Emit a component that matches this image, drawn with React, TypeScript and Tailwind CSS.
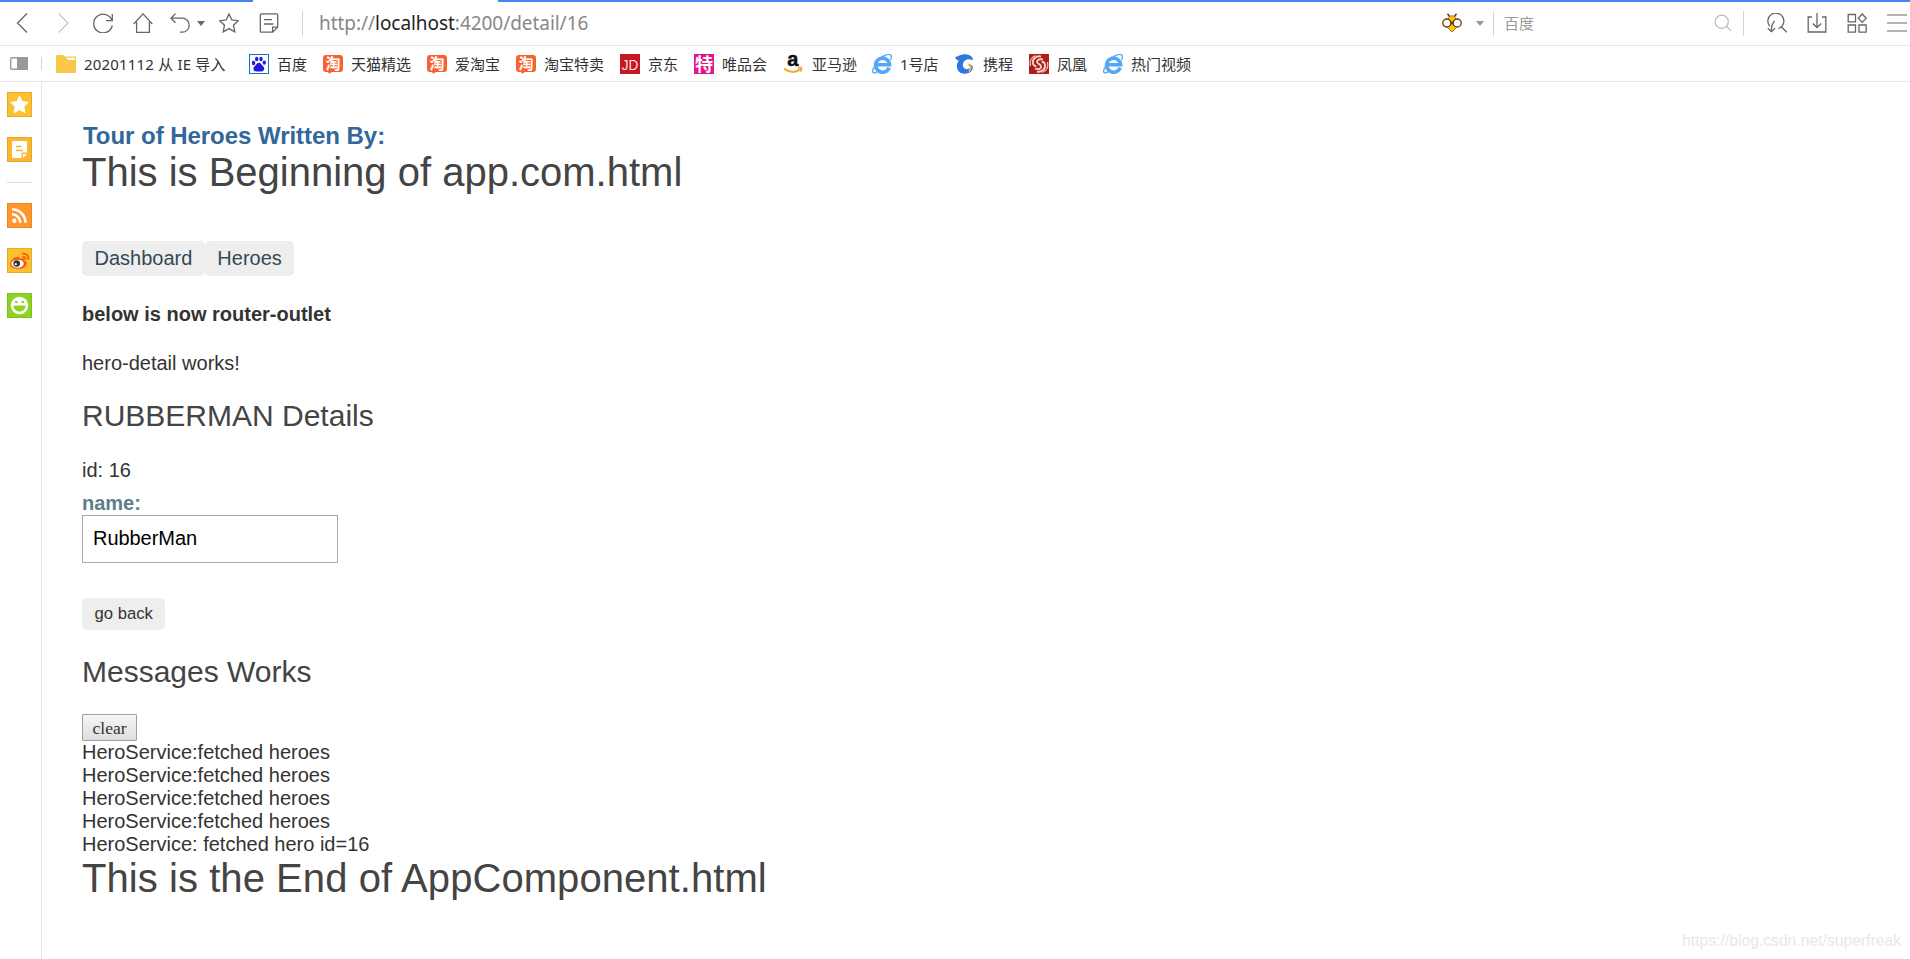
import type { ReactNode } from "react";

const ui = "font-['Noto_Sans','Noto_Sans_CJK_SC',sans-serif]";

function Glyph({ children, className = "" }: { children: ReactNode; className?: string }) {
  return (
    <svg viewBox="0 0 20 20" width="20" height="20" fill="none" stroke="#666" strokeWidth="1.3" className={`shrink-0 ${className}`}>
      {children}
    </svg>
  );
}

function Tile({ children }: { children: ReactNode }) {
  return (
    <svg viewBox="0 0 25 25" width="25" height="25" className="block shrink-0">
      {children}
    </svg>
  );
}

function TaoIcon() {
  return (
    <svg viewBox="0 0 20 20" width="20" height="20" className="shrink-0 overflow-visible">
      <path d="M3 1h14q3 0 3 3v11q0 3-3 3H9l-3 1.800L5 18H3q-3 0-3-3V4q0-3 3-3z" fill="#f8622e" />
      <text x="10" y="14.800" fontSize="15" fontWeight="700" textAnchor="middle" fill="#fff" fontFamily="Noto Sans CJK SC">淘</text>
    </svg>
  );
}

function IeIcon() {
  return (
    <svg viewBox="0 0 20 20" width="20" height="20" fill="none" className="shrink-0">
      <path d="M17.200 13.600A7 7 0 1 1 17.600 10.800H5.400" stroke="#52a8f7" strokeWidth="3.600" />
      <path d="M2.600 12C-.6 17.500.3 20 3.600 18.600c1-.4 2-1 2.700-1.600M10 2.900C15.500-.3 20-.6 19.300 3.500c-.1 1-.5 1.900-.9 2.600" stroke="#52a8f7" strokeWidth="1.300" />
    </svg>
  );
}

function BaiduIcon() {
  return (
    <svg viewBox="0 0 20 20" width="20" height="20" className="shrink-0">
      <rect x=".5" y=".5" width="19" height="19" fill="#fff" stroke="#1073c4" />
      <g fill="#2319dc">
        <ellipse cx="4.600" cy="9" rx="1.700" ry="2.200" />
        <ellipse cx="7.700" cy="5" rx="1.700" ry="2.300" />
        <ellipse cx="12" cy="5" rx="1.700" ry="2.300" />
        <ellipse cx="15.300" cy="8.600" rx="1.700" ry="2.200" />
        <path d="M9.900 8.800c1.800 0 2.500 1.600 3.800 2.900 2.600 2.400 1.600 5.700-1 5.700H7c-2.800 0-3.500-3.200-.9-5.600 1.300-1.300 2-3 3.800-3z" />
      </g>
    </svg>
  );
}

const bookmarks: { label: string; width: string; icon: ReactNode }[] = [
  {
    label: "20201112 从 IE 导入",
    width: "w-[193px] tracking-[0.18px]",
    icon: (
      <svg viewBox="0 0 20 20" width="20" height="20" className="shrink-0">
        <path d="M0 2q0-1 1-1h6l2 1.500h10q1 0 1 1V18q0 1-1 1H1q-1 0-1-1z" fill="#f9c84b" />
        <path d="M10 3.800h8.800V6H12z" fill="#fff" />
      </svg>
    ),
  },
  { label: "百度", width: "w-[74px]", icon: <BaiduIcon /> },
  { label: "天猫精选", width: "w-[104px]", icon: <TaoIcon /> },
  { label: "爱淘宝", width: "w-[89px]", icon: <TaoIcon /> },
  { label: "淘宝特卖", width: "w-[104px]", icon: <TaoIcon /> },
  {
    label: "京东",
    width: "w-[74px]",
    icon: (
      <svg viewBox="0 0 20 20" width="20" height="20" className="shrink-0">
        <rect width="20" height="20" fill="#c91623" />
        <text x="10" y="15.500" fontSize="15.500" textAnchor="middle" textLength="16.500" lengthAdjust="spacingAndGlyphs" fill="#fbe0e2" fontFamily="Liberation Sans">JD</text>
      </svg>
    ),
  },
  {
    label: "唯品会",
    width: "w-[90px]",
    icon: (
      <svg viewBox="0 0 20 20" width="20" height="20" className="shrink-0 overflow-visible">
        <rect width="20" height="20" fill="#e4148c" />
        <text x="10" y="16.500" fontSize="18" fontWeight="700" textAnchor="middle" fill="#fff" fontFamily="Noto Sans CJK SC">特</text>
      </svg>
    ),
  },
  {
    label: "亚马逊",
    width: "w-[88px]",
    icon: (
      <svg viewBox="0 0 20 20" width="20" height="20" className="shrink-0 overflow-visible">
        <text x="8.800" y="12.300" fontSize="20" fontWeight="700" textAnchor="middle" fill="#111" stroke="#111" strokeWidth=".5" fontFamily="Liberation Sans">a</text>
        <path d="M0 14.500c5 4.400 11.500 4.200 16 1.200M13.800 13.800c3.500-.7 4.600.2 2.700 3.700" fill="none" stroke="#f9a52b" strokeWidth="2" />
      </svg>
    ),
  },
  { label: "1号店", width: "w-[83px]", icon: <IeIcon /> },
  {
    label: "携程",
    width: "w-[74px]",
    icon: (
      <svg viewBox="0 0 20 20" width="20" height="20" className="shrink-0">
        <path d="M0 3C3.500 2.500 5 .5 9 .2c3.500-.3 6 .8 7.500 2.300.8.900 1 2 1.800 3-2 .8-4.300-.6-6.300 0C8.800 6.500 7 9.500 8.300 13c1.200 2.800 5 2.700 7 .6l1.600 3C13 21 5.500 21 2.800 16 1.200 13 1.600 9.500 3.800 6.500 2.200 6.300.6 5 0 3z" fill="#2a78e0" />
        <path d="M13 10.500c4-.6 6.200 2 4 5.500-1 1.700-3 2.500-4.500 2.300 3-1.700 4-5 .5-7.800z" fill="#2a78e0" />
        <path d="M13.500 10c3 2 3 5 .3 7.500" fill="none" stroke="#f7b43c" strokeWidth="1.800" />
      </svg>
    ),
  },
  {
    label: "凤凰",
    width: "w-[74px]",
    icon: (
      <svg viewBox="0 0 20 20" width="20" height="20" className="shrink-0">
        <rect width="20" height="20" fill="#b01c16" />
        <g fill="none" stroke="#f2d3cf" strokeWidth="1.900">
          <path d="M14 5.500C11 4.500 7.500 6 8.200 8.500c.6 1.700 4.200 1.800 4 4.300-.3 2.200-3.700 3-6.200 1.700" />
          <path d="M12 2.500C7 1.500 3 5 4 9.500c.5 1.800 1.800 2.800 3.500 3M8 17.500c5 1 9-2.500 8-7-.5-1.800-1.800-2.800-3.500-3" />
          <path d="M1.500 12C.3 7 2.500 3 6.500 1.500M18.500 8c1.200 5-1 9-5 10.500" strokeWidth="1.200" />
        </g>
      </svg>
    ),
  },
  { label: "热门视频", width: "w-[104px]", icon: <IeIcon /> },
];

function Toolbar() {
  return (
    <div className="flex h-[46px] flex-col border-b border-[#e6e6e6]">
      <div className="flex h-[2px] shrink-0 justify-between">
        <div className="w-[253px] bg-[#4486f0]" />
        <div className="w-[1412px] bg-[#4486f0]" />
      </div>
      <div className="flex h-[42px] items-center">
        <Glyph className="ml-3"><path d="M15 0.500 5.500 10l9.500 9.500" /></Glyph>
        <Glyph className="ml-[21px]"><path d="M5.500.5 15 10l-9.500 9.500" stroke="#c4c4c4" /></Glyph>
        <Glyph className="ml-5"><path d="M19 7.500A9.400 9.400 0 1 0 19.300 12.500M19.300 1v6.700H13" /></Glyph>
        <Glyph className="ml-5"><path d="M.7 11 10 .9 19.300 11M3.600 9v10.300h12.800V9" /></Glyph>
        <Glyph className="ml-[17px]"><path d="M5.500.6.900 5.200l4.600 4.600M1.200 5.200h11a7 7 0 0 1 0 14H10" /></Glyph>
        <svg viewBox="0 0 8 5" width="8" height="5" className="ml-[7px]"><path d="M0 0h8L4 5z" fill="#666" /></svg>
        <Glyph className="ml-[14px]"><path d="m10 .9 2.800 6 6.500.8-4.800 4.500 1.300 6.700-5.800-3.300-5.800 3.300 1.300-6.700L.7 7.700l6.500-.8z" /></Glyph>
        <Glyph className="ml-5"><path d="M2.200.9h15.600q.9 0 .9.900v12.400l-5 5H2.200q-.9 0-.9-.9V1.800q0-.9.900-.9zM18.500 14.200h-4.900V19M5 6.700h8M5 11h9.500" /></Glyph>
        <div className="ml-[23px] h-[25px] w-px bg-[#d4d4d4]" />
        <div className={`ml-4 flex-1 whitespace-nowrap text-[19px] leading-[26px] tracking-[-0.05px] text-[#888] ${ui}`}>
          http://<span className="text-[#222]">localhost</span>:4200/detail/16
        </div>
        <svg viewBox="0 0 20 20" width="20" height="20" className="shrink-0">
          <path d="M5.500.8 8 4M14.500.8 12 4" stroke="#6f3713" strokeWidth="1.500" />
          <path d="M10 2.800c2.600 0 4 2 4.500 4.200L15 14l-5 5-5-5 .5-7C6 4.800 7.400 2.800 10 2.800z" fill="#fbc70c" stroke="#8a5a10" strokeWidth=".7" />
          <circle cx="4.800" cy="10" r="4" fill="#fff" stroke="#6f3713" strokeWidth="1.300" />
          <circle cx="15.200" cy="10" r="4" fill="#fff" stroke="#6f3713" strokeWidth="1.300" />
          <path d="m8 7.500 4 5M12 7.500l-4 5" stroke="#6f3713" strokeWidth="1.200" />
        </svg>
        <svg viewBox="0 0 8 5" width="8" height="5" className="ml-[14px]"><path d="M0 0h8L4 5z" fill="#999" /></svg>
        <div className="ml-[9px] h-[25px] w-px bg-[#d4d4d4]" />
        <div className={`ml-[10px] w-[210px] text-[15px] leading-[22px] text-[#999] ${ui}`}>百度</div>
        <svg viewBox="0 0 18 18" width="18" height="18" fill="none" stroke="#bbb" strokeWidth="1.200" className="shrink-0">
          <circle cx="7.700" cy="7.700" r="6.600" /><path d="m12.500 12.500 4.700 4.400" />
        </svg>
        <div className="ml-[11px] h-[25px] w-px bg-[#d4d4d4]" />
        <Glyph className="ml-[23px]"><path d="M3 13.500A8 8 0 1 1 11.500 15.600M14 13.500l5.800 5.700M7.700 8Q4.300 11 4.300 18.500M.8 15.300l3.600 3.400 3.700-3.400" /></Glyph>
        <Glyph className="ml-5"><path d="M5 4H1.200v15h17.600V4H15M10 0v14.200M5.800 10.500l4.200 4 4.200-4" /></Glyph>
        <Glyph className="ml-5"><path d="M1.200 1.500H8.500v7.300H1.200zM1.200 12H8.500v7.200H1.200zM12 12h7.200v7.200H12zM15.200 1l4 4.200-4 4.200-4-4.200z" /></Glyph>
        <Glyph className="mr-[3px] ml-5"><path d="M0 2h20M0 10h20M0 18h20" strokeWidth="1.200" /></Glyph>
      </div>
    </div>
  );
}

function BookmarkBar() {
  return (
    <div className="flex h-9 items-center border-b border-[#e6e6e6]">
      <svg viewBox="0 0 18 13" width="18" height="13" className="ml-[10px] shrink-0">
        <rect x=".7" y=".7" width="16.600" height="11.600" rx="1" fill="#fff" stroke="#999" strokeWidth="1.400" />
        <path d="M7 0h10q1 0 1 1v11q0 1-1 1H7z" fill="#999" />
      </svg>
      <div className="mr-[14px] ml-[13px] h-[13px] w-px bg-[#d4d4d4]" />
      {bookmarks.map((b) => (
        <div key={b.label} className={`flex shrink-0 items-center gap-2 whitespace-nowrap text-[15px] leading-[22px] text-[#333] ${b.width} ${ui}`}>
          {b.icon}
          <span>{b.label}</span>
        </div>
      ))}
    </div>
  );
}

function Sidebar() {
  return (
    <div className="flex w-[42px] shrink-0 flex-col items-start border-r border-[#e6e6e6] pt-[10px] pl-[7px]">
      <Tile>
        <rect x=".5" y=".5" width="24" height="24" fill="#fdc02f" stroke="#e5ad2c" />
        <path d="m12.500 4 2.700 5.600 6 .8-4.400 4.200 1.100 6.100-5.400-3-5.400 3 1.100-6.100-4.400-4.200 6-.8z" fill="#fff" stroke="#fff" strokeLinejoin="round" />
      </Tile>
      <div className="h-5" />
      <Tile>
        <rect x=".5" y=".5" width="24" height="24" fill="#fdb62f" stroke="#e5a42c" />
        <path d="M5 5q0-1 1-1h13q1 0 1 1v10.500h-5.500V21H6q-1 0-1-1zM16 17h4l-4 4z" fill="#fff" />
        <path d="M9 9.500h5.500M9 13.500h7" stroke="#fdb62f" strokeWidth="1.500" />
      </Tile>
      <div className="mt-5 mb-5 h-px w-[25px] bg-[#d9d9d9]" />
      <Tile>
        <rect x=".5" y=".5" width="24" height="24" fill="#ff952b" stroke="#e88826" />
        <circle cx="7.300" cy="17.800" r="2.200" fill="#fff" />
        <path d="M5 11.300a8.300 8.300 0 0 1 8.300 8.500M5 6.300a13.500 13.500 0 0 1 13.500 13.500" fill="none" stroke="#fff" strokeWidth="2.500" />
      </Tile>
      <div className="h-5" />
      <Tile>
        <rect x=".5" y=".5" width="24" height="24" fill="#fdc02f" stroke="#e5ad2c" />
        <path d="M3 16c0-4 5-7.500 8-7.300 1.500.1 1.800 1 1.500 2 3-1 5-.3 4.700 1.800 4 1.500 3 5.500-.5 7.200C12 22 3 21 3 16z" fill="#fb5a0e" />
        <ellipse cx="10.600" cy="15.700" rx="6.200" ry="4" fill="#fff" />
        <circle cx="9.700" cy="15.500" r="3.300" fill="#333" />
        <circle cx="8.800" cy="16.200" r="1.100" fill="#fff" />
        <path d="M15.500 9c2.200-.4 3.300 1 2.800 3M15 5.800c4-1 7.300 2 6.200 6" fill="none" stroke="#fb5a0e" strokeWidth="1.700" />
      </Tile>
      <div className="h-5" />
      <Tile>
        <rect x=".5" y=".5" width="24" height="24" fill="#8ed222" stroke="#7fbd20" />
        <circle cx="12.500" cy="12.500" r="8.700" fill="#fff" />
        <path d="M6.500 12.500h12c0 8-12 8-12 0z" fill="#8ed222" />
        <circle cx="9.300" cy="9" r="1.300" fill="#8ed222" />
        <circle cx="15.700" cy="9" r="1.300" fill="#8ed222" />
      </Tile>
    </div>
  );
}

const messages = [
  "HeroService:fetched heroes",
  "HeroService:fetched heroes",
  "HeroService:fetched heroes",
  "HeroService:fetched heroes",
  "HeroService: fetched hero id=16",
];

export default function App() {
  return (
    <div className="flex h-[959px] w-[1910px] flex-col overflow-hidden bg-white">
      <Toolbar />
      <BookmarkBar />
      <div className="flex min-h-0 flex-1">
        <Sidebar />
        <main className="flex flex-1 flex-col items-start pt-10 pl-10 font-['Liberation_Sans',Arial,sans-serif] text-[20px] leading-[23px] text-[#333]">
          <div className="pl-px text-[24px] leading-[27px] font-bold tracking-[-0.04px] text-[#336699]">Tour of Heroes Written By:</div>
          <h1 className="text-[40px] leading-[46px] text-[#444]">This is Beginning of app.com.html</h1>
          <nav className="mt-[46px] flex text-[#334953]">
            <a className="rounded-[5px] bg-[#eee] px-[12.5px] py-[6px]">Dashboard</a>
            <a className="rounded-[5px] bg-[#eee] px-[12.5px] py-[6px]">Heroes</a>
          </nav>
          <div className="mt-[27px] font-bold">below is now router-outlet</div>
          <p className="mt-[26px]">hero-detail works!</p>
          <h2 className="mt-[24px] text-[30px] leading-[34px] text-[#444]">RUBBERMAN Details</h2>
          <div className="mt-[26px]">id: 16</div>
          <label className="mt-[10px] font-bold text-[#607d8b]">name:</label>
          <input
            className="h-12 w-[256px] border border-[#a9a9a9] bg-white px-[10px] pb-[2px] text-[20px] leading-[23px] tracking-[-0.05px] text-black outline-none"
            defaultValue="RubberMan"
          />
          <button className="mt-[35px] h-8 rounded-[5px] bg-[#eee] px-[12.5px] text-[16.67px] leading-[20px]">go back</button>
          <h2 className="mt-[25px] text-[30px] leading-[34px] text-[#444]">Messages Works</h2>
          <button className="mt-[25px] h-[27px] w-[55px] rounded-[1px] border border-[#a0a0a0] bg-linear-to-b from-[#f6f6f6] to-[#dddddd] pt-px font-['Liberation_Serif',serif] text-[17.5px] leading-[20px]">
            clear
          </button>
          {messages.map((m, i) => (
            <div key={i}>{m}</div>
          ))}
          <h1 className="-mt-px text-[40px] leading-[46px] tracking-[0.06px] text-[#444]">This is the End of AppComponent.html</h1>
          <div className="mt-[31px] mr-[9px] self-end text-[15.7px] leading-[18px] text-[#e8e8e8]">https://blog.csdn.net/superfreak</div>
        </main>
      </div>
    </div>
  );
}
